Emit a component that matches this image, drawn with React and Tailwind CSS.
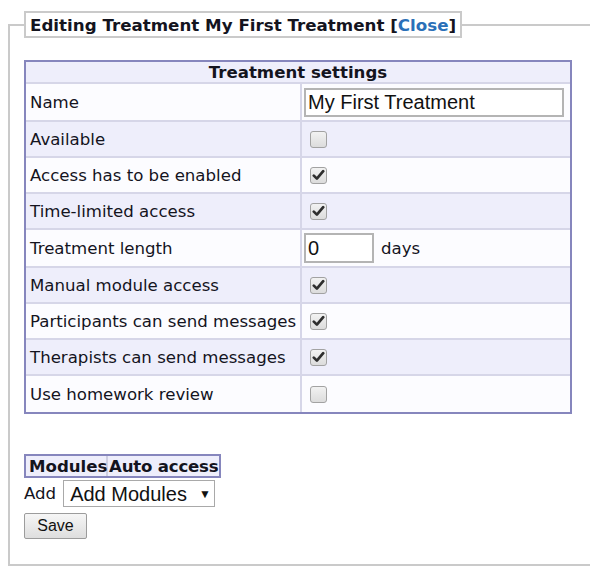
import React from "react";

function Check({ checked }) {
  return (
    <span className="ml-[6px] inline-flex h-[17px] w-[17px] items-center justify-center rounded-[3px] border border-[#a2a2a2] bg-gradient-to-b from-[#f2f2f2] to-[#dcdcdc]">
      {checked && (
        <svg width="13" height="12" viewBox="0 0 13 12">
          <path d="M1.8 6.6 L4.9 9.6 L11.2 2.2" fill="none" stroke="#2e2e2e" strokeWidth="2.7" strokeLinecap="round" strokeLinejoin="round" />
        </svg>
      )}
    </span>
  );
}

const rows = [
  { label: "Name", type: "name", h: "h-[38px]" },
  { label: "Available", type: "cb", checked: false },
  { label: "Access has to be enabled", type: "cb", checked: true },
  { label: "Time-limited access", type: "cb", checked: true },
  { label: "Treatment length", type: "days", h: "h-[38px]" },
  { label: "Manual module access", type: "cb", checked: true },
  { label: "Participants can send messages", type: "cb", checked: true },
  { label: "Therapists can send messages", type: "cb", checked: true },
  { label: "Use homework review", type: "cb", checked: false },
];

export default function App() {
  return (
    <div className="h-[574px] w-[590px] overflow-hidden bg-white font-['DejaVu_Sans',Verdana,sans-serif] text-[16.6px] text-[#14141e]">
      <fieldset className="ml-2 mt-[11px] w-[620px] border-2 border-[#cacaca] pb-[25px] pl-[14px] pt-[22px]">
        <legend className="h-[27px] border-2 border-[#cacaca] bg-white px-[4px] pt-[1px] text-[16.7px] font-bold leading-[23px]">
          Editing Treatment My First Treatment [<span className="text-[#2a70b8]">Close</span>]
        </legend>

        <div className="w-[548px] border-2 border-[#8686bd]">
          <div className="h-[22px] border-b-2 border-[#d6d6e8] bg-[#eeeefb] text-center font-bold leading-[21px]">
            Treatment settings
          </div>
          {rows.map((r, i) => (
            <div
              key={r.label}
              className={
                "flex " +
                (i % 2 === 0 ? "bg-[#fcfcff] " : "bg-[#eeeefb] ") +
                (i < rows.length - 1 ? "border-b-2 border-[#d6d6e8] " : "") +
                (r.h ? r.h : "h-[36px]")
              }
            >
              <div className="flex w-[276px] items-center border-r-2 border-[#d6d6e8] pl-[4px] pt-[3px]">{r.label}</div>
              <div className="flex flex-1 items-center pl-[2px]">
                {r.type === "cb" && <Check checked={r.checked} />}
                {r.type === "name" && (
                  <div className="flex h-[29px] w-[260px] items-center border-2 border-[#b4b4b4] bg-white pl-[2px] font-['Liberation_Sans',Arial,sans-serif] text-[20px] text-[#111]">
                    My First Treatment
                  </div>
                )}
                {r.type === "days" && (
                  <>
                    <div className="flex h-[30px] w-[70px] items-center border-2 border-[#b4b4b4] bg-white pl-[2px] font-['Liberation_Sans',Arial,sans-serif] text-[20px] text-[#111]">
                      0
                    </div>
                    <span className="ml-[7px] pt-[3px]">days</span>
                  </>
                )}
              </div>
            </div>
          ))}
        </div>

        <div className="mt-[40px] flex h-[24px] w-fit whitespace-nowrap border-2 border-[#8686bd] bg-[#eeeefb] font-bold leading-[21px]">
          <div className="w-[82px] border-r-2 border-[#cfcfe2] pl-[3px]">Modules</div>
          <div className="pl-[1px] pr-[1px] tracking-[-0.2px]">Auto access</div>
        </div>

        <div className="mt-[2px] flex items-center">
          <span className="mr-[7px] pt-[2px]">Add</span>
          <div className="flex h-[27px] w-[152px] items-center border border-[#a9a9a9] bg-white pl-[6px] font-['Liberation_Sans',Arial,sans-serif] text-[20px] text-[#111]">
            Add Modules
            <span className="ml-[12px] text-[12px]">▼</span>
          </div>
        </div>

        <button className="mt-[6px] flex h-[26px] w-[63px] items-center justify-center rounded-[2px] border border-[#9c9c9c] bg-gradient-to-b from-[#f6f6f6] to-[#dedede] font-['Liberation_Sans',Arial,sans-serif] text-[16px] text-[#111]">
          Save
        </button>
      </fieldset>
    </div>
  );
}
